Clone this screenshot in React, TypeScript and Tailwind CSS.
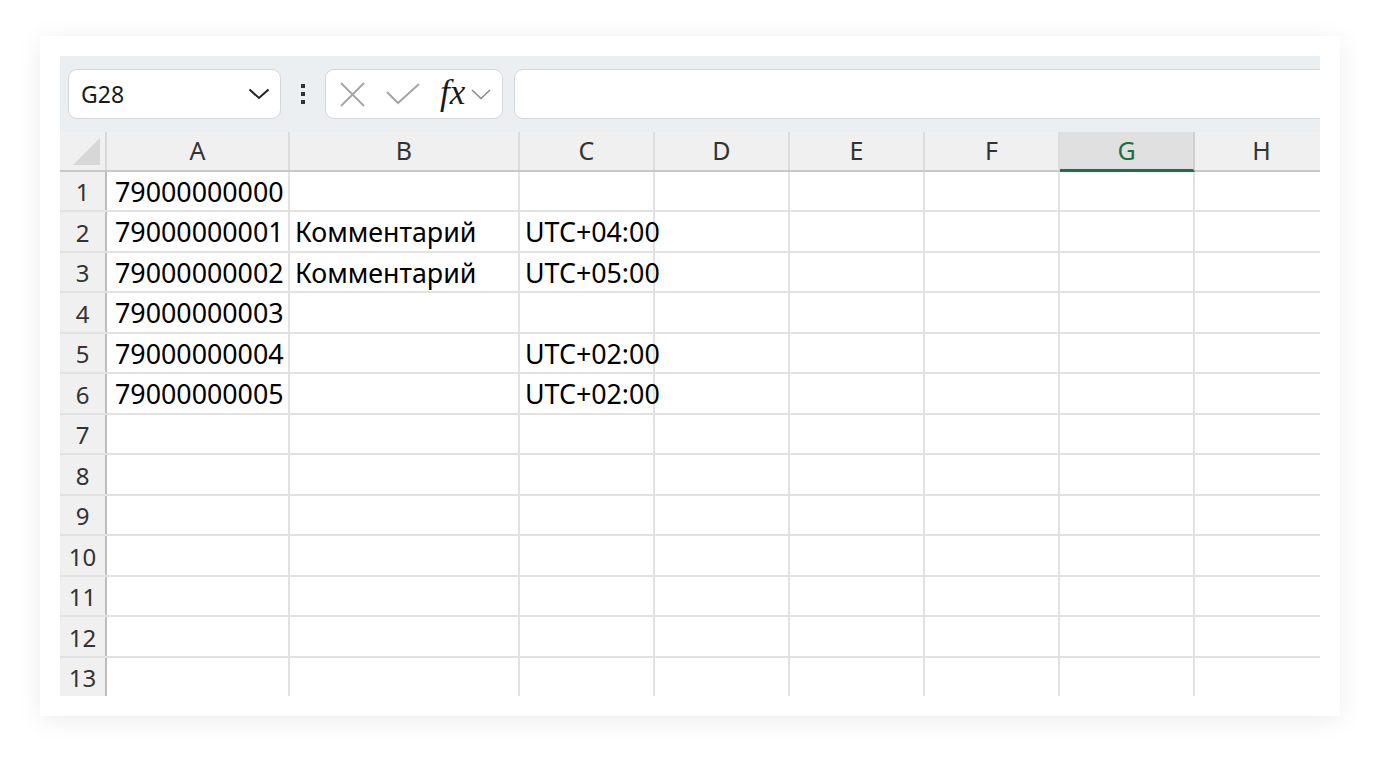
import React from "react";

const cols = [
  { l: "A", w: "w-[183px]" },
  { l: "B", w: "w-[230px]" },
  { l: "C", w: "w-[135px]" },
  { l: "D", w: "w-[135px]" },
  { l: "E", w: "w-[135px]" },
  { l: "F", w: "w-[135px]" },
  { l: "G", w: "w-[135px]" },
  { l: "H", w: "w-[135px]" },
];

const data: Record<number, string[]> = {
  1: ["79000000000", "", ""],
  2: ["79000000001", "Комментарий", "UTC+04:00"],
  3: ["79000000002", "Комментарий", "UTC+05:00"],
  4: ["79000000003", "", ""],
  5: ["79000000004", "", "UTC+02:00"],
  6: ["79000000005", "", "UTC+02:00"],
};

const font = { fontFamily: '"Noto Sans", "Open Sans", sans-serif' };

export default function App() {
  const rows = Array.from({ length: 13 }, (_, i) => i + 1);
  return (
    <div className="w-[1380px] h-[760px] bg-white pt-[36px] pl-[40px]" style={font}>
      <div className="w-[1300px] h-[680px] bg-white p-[20px] shadow-[0_4px_24px_rgba(0,0,0,0.08)]">
        <div className="w-[1260px] h-[640px] overflow-hidden flex flex-col">
          {/* toolbar */}
          <div className="h-[76px] shrink-0 bg-[#eceff2] flex items-center pl-[8px]">
            <div className="w-[213px] shrink-0 h-[50px] rounded-[9px] border border-[#d3d6da] bg-white flex items-center justify-between pl-[12px] pr-[10px]">
              <span className="text-[23px] text-[#1a1a1a]">G28</span>
              <svg width="22" height="12" viewBox="0 0 22 12" fill="none">
                <path d="M1.5 1.5 L11 10 L20.5 1.5" stroke="#222" strokeWidth="2" />
              </svg>
            </div>
            <div className="w-[44px] shrink-0 flex flex-col items-center gap-[4px]">
              <div className="w-[4px] h-[4px] bg-[#333]" />
              <div className="w-[4px] h-[4px] bg-[#333]" />
              <div className="w-[4px] h-[4px] bg-[#333]" />
            </div>
            <div className="w-[178px] shrink-0 h-[50px] rounded-[9px] border border-[#d3d6da] bg-white flex items-center pl-[14px]">
              <svg width="25" height="25" viewBox="0 0 26 26" fill="none" className="shrink-0">
                <path d="M1 1 L25 25 M25 1 L1 25" stroke="#a6a6a6" strokeWidth="2" />
              </svg>
              <svg width="34" height="22" viewBox="0 0 34 22" fill="none" className="ml-[21px] shrink-0">
                <path d="M1 9 L12 20 L33 1" stroke="#a6a6a6" strokeWidth="2" />
              </svg>
              <span
                className="ml-[20px] text-[35px] italic font-normal leading-none text-[#1a1a1a] mt-[-4px] shrink-0"
                style={{ fontFamily: '"Liberation Serif", "DejaVu Serif", serif' }}
              >
                fx
              </span>
              <svg width="20" height="11" viewBox="0 0 20 11" fill="none" className="ml-[6px] shrink-0">
                <path d="M1 1 L10 9.5 L19 1" stroke="#8a8a8a" strokeWidth="1.6" />
              </svg>
            </div>
            <div className="ml-[11px] w-[830px] shrink-0 h-[50px] rounded-l-[9px] border border-[#d3d6da] bg-white" />
          </div>

          {/* header row */}
          <div className="h-[40px] shrink-0 flex bg-[#f0f0f0] border-b-2 border-[#c8c8c8]">
            <div className="w-[47px] shrink-0 border-r-2 border-[#d8d8d8] flex items-end justify-end pr-[5px] pb-[5px]">
              <svg width="27" height="27" viewBox="0 0 27 27">
                <path d="M27 0 L27 27 L0 27 Z" fill="#d7d7d7" />
              </svg>
            </div>
            {cols.map((c) => {
              const sel = c.l === "G";
              return (
                <div
                  key={c.l}
                  className={`${c.w} shrink-0 flex items-center justify-center text-[25px] border-r-2 ${
                    sel
                      ? "bg-[#e0e0e0] text-[#1e6e42] border-[#d0d0d0] border-b-[3px] border-b-[#1e7145] mb-[-2px]"
                      : "text-[#333] border-[#dcdcdc]"
                  }`}
                >
                  {c.l}
                </div>
              );
            })}
          </div>

          {/* rows */}
          {rows.map((r) => {
            const d = data[r] || ["", "", ""];
            return (
              <div
                key={r}
                className={`${r % 2 === 1 ? "h-[40px]" : "h-[41px]"} shrink-0 flex border-b-2 border-[#e2e2e2]`}
              >
                <div className="w-[47px] shrink-0 bg-[#f0f0f0] border-r-2 border-[#bdbdbd] flex items-center justify-center text-[24px] text-[#333] pt-[2px]">
                  {r}
                </div>
                {cols.map((c, ci) => (
                  <div
                    key={c.l}
                    className={`${c.w} shrink-0 border-r-2 border-[#e2e2e2] flex items-center text-[26.8px] text-black whitespace-nowrap pt-[2px] ${
                      ci === 0 ? "pl-[8px]" : "pl-[5px]"
                    }`}
                  >
                    {ci < 3 ? d[ci] : ""}
                  </div>
                ))}
              </div>
            );
          })}
        </div>
      </div>
    </div>
  );
}
